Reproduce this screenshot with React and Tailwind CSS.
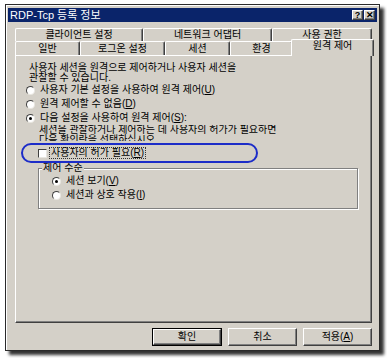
import React from "react";

const raised =
  "border border-t-white border-l-white border-r-[#404040] border-b-[#404040] shadow-[inset_-1px_-1px_0_#808080]";

function Radio({ checked, children, className = "" }) {
  return (
    <div className={`flex items-center h-[14px] ${className}`}>
      <span className="flex items-center justify-center w-[9px] h-[9px] rounded-full bg-white border border-t-[#404040] border-l-[#404040] border-r-[#e8e6e0] border-b-[#e8e6e0]">
        {checked && <span className="w-[3px] h-[3px] rounded-full bg-black" />}
      </span>
      <span className="ml-[5px] whitespace-nowrap">{children}</span>
    </div>
  );
}

function Tab({ label, w, selected }) {
  if (selected) {
    return (
      <div
        className={`relative z-10 -mx-[2px] -mt-[2px] h-[17px] bg-[#d4d0c8] rounded-t-[2px] border-t border-l border-r border-t-white border-l-white border-r-[#404040] shadow-[inset_-1px_0_0_#808080] flex items-start justify-center pt-[1px] ${w}`}
      >
        {label}
      </div>
    );
  }
  return (
    <div
      className={`h-full rounded-t-[2px] border-t border-l border-r border-t-white border-l-white border-r-[#404040] shadow-[inset_-1px_0_0_#808080] flex items-center justify-center ${w}`}
    >
      {label}
    </div>
  );
}

function Button({ children, primary }) {
  if (primary) {
    return (
      <div className="w-[70px] h-[18px] border border-black">
        <div className={`w-full h-full flex items-center justify-center ${raised}`}>{children}</div>
      </div>
    );
  }
  return (
    <div className={`w-[69px] h-[18px] flex items-center justify-center ${raised}`}>{children}</div>
  );
}

export default function App() {
  return (
    <div className="w-[387px] h-[358px] bg-white overflow-hidden pt-[4px] pl-[5px] [font-family:'Liberation_Sans','Noto_Sans_CJK_KR',sans-serif] text-[9.6px] text-black">
      <div className="w-[375px] h-[347px] bg-[#d4d0c8] border border-[#2a2a2a] shadow-[inset_1px_1px_0_white,4px_4px_3px_rgba(0,0,0,0.8)] pt-[3px] px-[2px] flex flex-col">
        {/* title bar */}
        <div className="h-[14px] bg-[#0a246a] flex items-center justify-between pl-[2px] pr-[2px]">
          <span className="text-white text-[11px] leading-[14px] whitespace-nowrap">RDP-Tcp 등록 정보</span>
          <div className="flex gap-[1px]">
            <div className={`w-[11px] h-[10px] bg-[#d4d0c8] flex items-center justify-center text-[9px] font-bold leading-none ${raised}`}>?</div>
            <div className={`w-[11px] h-[10px] bg-[#d4d0c8] flex items-center justify-center text-[9px] font-bold leading-none ${raised}`}>✕</div>
          </div>
        </div>

        {/* tabs */}
        <div className="mt-[6px] pl-[7px] pr-[5px] text-[10px] leading-none">
          <div className="flex h-[13px]">
            <Tab label="클라이언트 설정" w="w-[128px]" />
            <Tab label="네트워크 어댑터" w="w-[129px]" />
            <Tab label="사용 권한" w="w-[100px]" />
          </div>
          <div className="flex h-[14px]">
            <Tab label="일반" w="w-[65px]" />
            <Tab label="로그온 설정" w="w-[85px]" />
            <Tab label="세션" w="w-[65px]" />
            <Tab label="환경" w="w-[63px]" />
            <Tab label="원격 제어" w="w-[83px]" selected />
          </div>

          {/* panel */}
          <div className={`h-[268px] ${raised} pt-[7px]`}>
            <div className="ml-[13px] leading-[10px] whitespace-nowrap">
              <div>사용자 세션을 원격으로 제어하거나 사용자 세션을</div>
              <div>관찰할 수 있습니다.</div>
            </div>
            <Radio className="ml-[10px]">
              사용자 기본 설정을 사용하여 원격 제어(<span className="underline">U</span>)
            </Radio>
            <Radio className="ml-[10px]">
              원격 제어할 수 없음(<span className="underline">D</span>)
            </Radio>
            <Radio className="ml-[10px]" checked>
              다음 설정을 사용하여 원격 제어(<span className="underline">S</span>):
            </Radio>
            <div className="ml-[23px] h-[16px] overflow-hidden leading-[9.5px] whitespace-nowrap">
              <div>세션을 관찰하거나 제어하는 데 사용자의 허가가 필요하면</div>
              <div>다음 확인란을 선택하십시오.</div>
            </div>
            <div className="relative mt-[2px] h-[20px] flex items-center pl-[22px]">
              <span className="w-[9px] h-[9px] bg-white border border-t-[#404040] border-l-[#404040] border-r-[#e8e6e0] border-b-[#e8e6e0]" />
              <span className="ml-[2px] px-[1px] border border-dotted border-[#333] leading-[10px] whitespace-nowrap">
                사용자의 허가 필요(<span className="underline">R</span>)
              </span>
              <div className="absolute left-[5px] top-0 w-[237px] h-[20px] rounded-full border-2 border-[#1c2cc8]" />
            </div>
            <fieldset className="ml-[22px] w-[320px] border border-[#808080] shadow-[inset_1px_1px_0_white,1px_1px_0_white] pb-[6px]">
              <legend className="ml-[3px] px-[1px] leading-[10px] bg-[#d4d0c8]">제어 수준</legend>
              <Radio className="ml-[13px] mt-[1px]" checked>
                세션 보기(<span className="underline">V</span>)
              </Radio>
              <Radio className="ml-[13px]">
                세션과 상호 작용(<span className="underline">I</span>)
              </Radio>
            </fieldset>
          </div>

          {/* buttons */}
          <div className="mt-[5px] flex justify-end gap-[6px] leading-none text-[10px]">
            <Button primary>확인</Button>
            <Button>취소</Button>
            <Button>
              적용(<span className="underline">A</span>)
            </Button>
          </div>
        </div>
      </div>
    </div>
  );
}
